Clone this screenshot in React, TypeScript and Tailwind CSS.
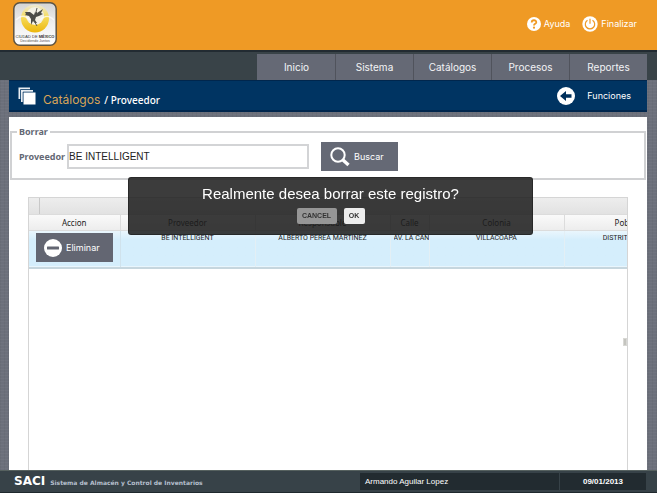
import React from "react";

const menu = ["Inicio", "Sistema", "Catálogos", "Procesos", "Reportes"];

const columns = [
  { title: "Accion", width: "w-[91px]" },
  { title: "Proveedor", width: "w-[135px]" },
  { title: "Responsable", width: "w-[135px]" },
  { title: "Calle", width: "w-[39px]" },
  { title: "Colonia", width: "w-[135px]" },
  { title: "Poblacion", width: "w-[138px]" },
];

const record = ["BE INTELLIGENT", "ALBERTO PEREA MARTINEZ", "AV. LA CANTERA", "VILLACOAPA", "DISTRITO FEDERAL"];

function CityLogo() {
  return (
    <svg viewBox="0 0 44 44" className="size-11" role="img" aria-label="Ciudad de México, Decidiendo Juntos">
      <defs>
        <linearGradient id="plate" x1="0" y1="0" x2="0" y2="1">
          <stop offset="0" stopColor="#d4d4d4" />
          <stop offset="0.5" stopColor="#efefef" />
          <stop offset="1" stopColor="#ffffff" />
        </linearGradient>
        <linearGradient id="sun" x1="0" y1="0" x2="0" y2="1">
          <stop offset="0" stopColor="#ece8d8" />
          <stop offset="0.45" stopColor="#f5dc5a" />
          <stop offset="1" stopColor="#edb60c" />
        </linearGradient>
      </defs>
      <rect x="0.8" y="0.8" width="42.4" height="42.4" rx="6" fill="url(#plate)" stroke="#5d5443" strokeWidth="1.5" />
      <circle cx="22" cy="16.5" r="14" fill="url(#sun)" />
      <circle cx="22" cy="14" r="9" fill="#f3f1e6" />
      <path d="M3 18c5-5 9-5 14 0M27 18c5-5 9-5 14 0" fill="none" stroke="#ffffff" strokeWidth="1.5" opacity="0.7" />
      <path d="M12 10l5 0 4 3 1-3 2 1 6-4-2 4 2 1-4 2-3 1-1 3 2 3-2 0-2-2-2 4 0-6-2-3-4-1 1-1z" fill="#4b4c47" />
      <path d="M24 6l-1 4 2 2M20 17l4 7" fill="none" stroke="#55554f" />
      <text x="22" y="36" textAnchor="middle" fontSize="4" fontFamily="Liberation Sans, sans-serif" fill="#333">
        CIUDAD DE <tspan fontWeight="700">MÉXICO</tspan>
      </text>
      <text x="22" y="40" textAnchor="middle" fontSize="3.6" fontFamily="Liberation Sans, sans-serif" fill="#555">
        Decidiendo Juntos
      </text>
    </svg>
  );
}

function HelpIcon() {
  return (
    <svg viewBox="0 0 14 14" className="size-3.5" aria-hidden="true">
      <circle cx="7" cy="7" r="7" fill="#fff" />
      <path d="M4.7 5.5C4.7 2.5 9.3 2.6 9.3 5.2C9.3 6.8 7 6.8 7 8.4" fill="none" stroke="#ef9a25" strokeWidth="1.8" />
      <circle cx="7" cy="10.7" r="1.1" fill="#ef9a25" />
    </svg>
  );
}

function PowerIcon() {
  return (
    <svg viewBox="0 0 16 16" className="size-4" aria-hidden="true">
      <circle cx="8" cy="8" r="7.7" fill="#fff" />
      <path d="M5.5 4.2a4.7 4.7 0 1 0 5 0M8 2.7v5" fill="none" stroke="#ef9a25" strokeWidth="1.2" />
    </svg>
  );
}

function StackIcon() {
  return (
    <svg viewBox="0 0 18 18" className="size-[18px]" aria-hidden="true">
      <path d="M0.5 12V0.5H12v2H2.5V12zM3 15V3h12v2H5v10z" fill="#e8edf2" />
      <path d="M2.5 12V2.5H12M5 15V5h10" fill="none" stroke="#003462" strokeWidth="0.6" />
      <rect x="5.5" y="5.5" width="12" height="12" fill="#fff" />
    </svg>
  );
}

function BackIcon() {
  return (
    <svg viewBox="0 0 18 18" className="size-[18px]" aria-hidden="true">
      <circle cx="9" cy="9" r="9" fill="#fff" />
      <path d="M3 9l6-5v3.2h5.5v3.6H9V14z" fill="#00305c" />
    </svg>
  );
}

function SearchIcon() {
  return (
    <svg viewBox="0 0 20 20" className="size-5" aria-hidden="true">
      <circle cx="8" cy="8" r="6.7" fill="none" stroke="#fff" strokeWidth="2" />
      <path d="M13 13l5.5 5" stroke="#fff" strokeWidth="3.4" />
    </svg>
  );
}

function MinusIcon() {
  return (
    <svg viewBox="0 0 18 18" className="size-[18px]" aria-hidden="true">
      <circle cx="9" cy="9" r="9" fill="#fff" />
      <rect x="3" y="7.5" width="12" height="3" rx="0.5" fill="#636672" />
    </svg>
  );
}

export default function App() {
  return (
    <div className="flex min-h-screen flex-col bg-[#6c707b] bg-[repeating-linear-gradient(0deg,#ffffff08_0px,#ffffff08_1px,transparent_1px,transparent_3px),repeating-linear-gradient(90deg,#0000000a_0px,#0000000a_1px,transparent_1px,transparent_4px)] font-['Liberation_Sans',sans-serif]">
      <header>
        <div className="flex h-[50px] items-start justify-between bg-[#ef9a25] pt-0.5 pr-5 pl-[13px]">
          <CityLogo />
          <div className="flex gap-3 pt-3.5 font-['Inter',sans-serif] text-[9px] leading-4 text-white">
            <a href="#ayuda" className="flex items-center gap-[3px]">
              <HelpIcon />
              Ayuda
            </a>
            <a href="#finalizar" className="flex items-center gap-[3px]">
              <PowerIcon />
              Finalizar
            </a>
          </div>
        </div>
        <nav className="flex h-[30px] justify-end border-t-2 border-[#222b32] bg-[#394348] pt-0.5 pr-2.5">
          {menu.map((item) => (
            <a
              key={item}
              href={"#" + item}
              className="flex w-[78px] items-center justify-center border-l border-[#50535c] bg-[#656975] font-['Inter',sans-serif] text-[10px] text-gray-100 first:border-[#656975]"
            >
              {item}
            </a>
          ))}
        </nav>
      </header>

      <div className="mr-2.5 ml-[9px] flex h-8 items-center justify-between border-t border-b-2 border-[#00264d] bg-[#003462] pr-4 pl-[9px]">
        <div className="flex items-center">
          <StackIcon />
          <h1 className="flex items-baseline gap-1 pt-2 pl-[7px] text-white">
            <span className="font-['Inter',sans-serif] text-[12px] leading-4 text-[#d9a457]">Catálogos</span>
            <span className="font-['Noto_Sans',sans-serif] text-[10px] leading-4 font-medium">/ Proveedor</span>
          </h1>
        </div>
        <a href="#funciones" className="flex items-center gap-3 font-['Inter',sans-serif] text-[9px] text-white">
          <BackIcon />
          Funciones
        </a>
      </div>

      <main className="mt-[5px] mr-2.5 ml-[9px] flex flex-1 flex-col bg-white px-px pt-[9px]">
        <form onSubmit={(e) => e.preventDefault()}>
          <fieldset className="h-[54px] border-2 border-[#d0d1d3] px-[5px]">
            <legend className="px-0.5 font-['Noto_Sans',sans-serif] text-[9px] leading-3 font-bold text-[#646874]">Borrar</legend>
            <div className="flex items-center pt-1 pl-0.5">
              <label htmlFor="proveedor" className="pr-0.5 font-['Noto_Sans',sans-serif] text-[9px] font-bold text-[#646874]">
                Proveedor
              </label>
              <input
                id="proveedor"
                defaultValue="BE INTELLIGENT"
                className="h-[25px] w-[242px] border-2 border-[#d3d4d6] bg-white text-[10px] text-[#222] outline-none"
              />
              <button type="submit" className="ml-3 flex h-[29px] w-[77px] items-center gap-1 bg-[#656975] pl-[9px] font-['Inter',sans-serif] text-[9px] text-white">
                <SearchIcon />
                Buscar
              </button>
            </div>
          </fieldset>
        </form>

        <section className="mt-[17px] mr-[18px] ml-[18px] flex-1 overflow-hidden border border-b-0 border-[#d5d5d5]">
          <div className="h-4 bg-linear-to-b from-[#ededed] to-[#e2e2e2] pl-2.5">
            <div className="h-full w-px bg-[#c8c8c8]" />
          </div>
          <table className="w-[673px] table-fixed border-collapse">
            <thead>
              <tr className="h-4 bg-linear-to-b from-[#fafafa] to-[#ececec] font-['Noto_Sans',sans-serif] text-[8px] leading-3 text-[#222]">
                {columns.map((c) => (
                  <th key={c.title} scope="col" className={c.width + " overflow-hidden border-y border-r border-[#dcdcdc] p-0 font-normal"}>
                    {c.title}
                  </th>
                ))}
              </tr>
            </thead>
            <tbody>
              <tr className="h-[37px] border-b-2 border-[#c6d6de] bg-linear-to-b from-[#eaf6fd] to-[#d5eefc] to-25% align-top font-['Roboto',sans-serif] text-[7px] leading-[10px] text-[#222]">
                <td className="border-r border-[#d0e2ec] p-0 pt-0.5 pl-[7px]">
                  <button type="button" className="flex h-[29px] w-[77px] items-center gap-1 bg-[#636672] pl-2 font-['Inter',sans-serif] text-[9px] text-white">
                    <MinusIcon />
                    Eliminar
                  </button>
                </td>
                {record.map((value, i) => (
                  <td
                    key={value}
                    className={(i === 2 ? "pr-0 pl-[3px] text-left" : "px-0 text-center") + " border-r border-[#e3eff5] pt-0.5"}
                  >
                    <div className="overflow-hidden whitespace-nowrap">{value}</div>
                  </td>
                ))}
              </tr>
            </tbody>
          </table>
          <div className="mt-[69px] ml-auto h-2 w-1 border border-[#d8d8d4] bg-[#c4c4bf]" />
        </section>
      </main>

      <footer className="flex h-[23px] items-center justify-between border-t border-b border-[#56615f] border-b-[#1f282d] bg-[#374248] pr-[11px] pl-3.5">
        <p className="flex items-baseline gap-[5px] font-['DejaVu_Sans',sans-serif] leading-4 font-bold">
          <span className="text-[12px] text-white">SACI</span>
          <span className="text-[6px] text-[#b5bfcd]">Sistema de Almacén y Control de Inventarios</span>
        </p>
        <div className="flex gap-px text-[8px] leading-[17px] text-white">
          <span className="w-[199px] bg-[#222b30] pl-[5px]">Armando Aguilar Lopez</span>
          <time className="w-[86px] bg-[#222b30] text-center font-bold">09/01/2013</time>
        </div>
      </footer>

      <div
        role="alertdialog"
        aria-labelledby="pregunta"
        className="fixed top-[177px] right-[124px] left-32 flex h-[58px] flex-col items-center rounded-[3px] border border-black/30 bg-[#1c1c1c]/86 pt-2"
      >
        <p id="pregunta" className="text-[15px] leading-4 text-white">
          Realmente desea borrar este registro?
        </p>
        <div className="flex gap-[7px] pt-1.5 text-[7px] font-bold text-[#333]">
          <button type="button" className="h-4 w-10 rounded-xs bg-[#969696]">
            CANCEL
          </button>
          <button type="button" className="h-4 w-[21px] rounded-xs bg-[#ededed]">
            OK
          </button>
        </div>
      </div>
    </div>
  );
}
